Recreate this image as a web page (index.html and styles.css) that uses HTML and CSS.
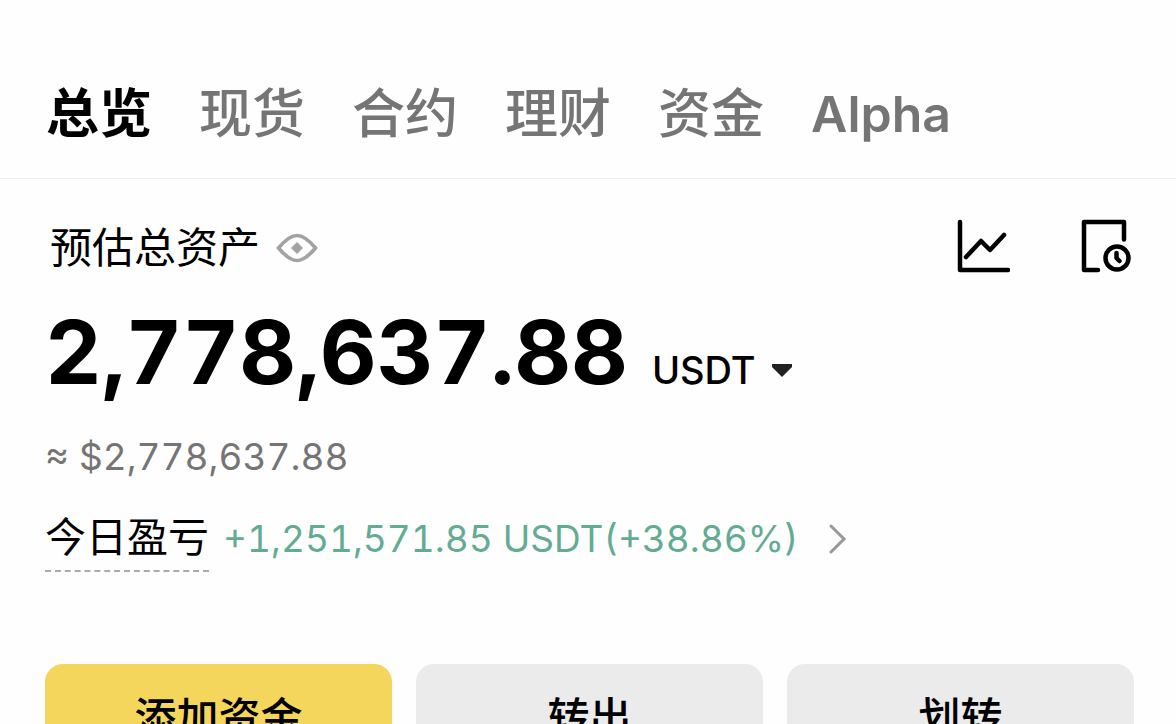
FILE: index.html
```html
<!DOCTYPE html>
<html lang="zh-CN">
<head>
  <meta charset="UTF-8">
  <meta name="viewport" content="width=device-width, initial-scale=1">
  <title>总览</title>
  <link rel="stylesheet" href="styles.css">
</head>
<body>
  <nav class="tabs">
    <a href="#" class="tab active">总览</a>
    <a href="#" class="tab">现货</a>
    <a href="#" class="tab">合约</a>
    <a href="#" class="tab">理财</a>
    <a href="#" class="tab">资金</a>
    <a href="#" class="tab">Alpha</a>
  </nav>

  <main class="overview">
    <div class="overview-head">
      <span class="label">预估总资产</span>
      <button class="icon-btn eye" aria-label="隐藏余额">
        <svg width="42" height="30" viewBox="0 0 42 30" fill="none">
          <path d="M2.500 15C10 6 15 2.500 21 2.500S32 6 39.500 15C32 24 27 27.500 21 27.500S10 24 2.500 15Z" stroke="#a3a3a3" stroke-width="3.600"/>
          <path d="M21 9l6 6-6 6-6-6z" fill="#a3a3a3"/>
        </svg>
      </button>
      <div class="tools">
        <button class="icon-btn" aria-label="走势">
          <svg width="54" height="54" viewBox="0 0 54 54" fill="none" stroke="#000" stroke-width="4.500" stroke-linecap="round" stroke-linejoin="round">
            <path d="M4 3v48h48"/>
            <path d="M10 38l15-16 9 9 14-15"/>
          </svg>
        </button>
        <button class="icon-btn" aria-label="历史记录">
          <svg width="54" height="54" viewBox="0 0 54 54" fill="none" stroke="#000" stroke-width="4.500" stroke-linecap="round" stroke-linejoin="round">
            <path d="M18 51H4V3h40v17.500"/>
            <circle cx="37" cy="39" r="11.500"/>
            <path d="M36.500 34v5l3 3"/>
          </svg>
        </button>
      </div>
    </div>

    <div class="balance">
      <span class="amount">2,778,637.88</span>
      <label class="currency">
        <select aria-label="币种">
          <option>USDT</option>
        </select>
        <svg width="20" height="15" viewBox="0 0 20 15"><path d="M0 1h20v3L10 14 0 4z" fill="#222"/></svg>
      </label>
    </div>

    <div class="fiat">≈ $2,778,637.88</div>

    <div class="pnl">
      <span class="pnl-label">今日盈亏</span>
      <a href="#" class="pnl-link">
        <span>+1,251,571.85 USDT(+38.86%)</span>
        <svg width="18" height="30" viewBox="0 0 18 30" fill="none"><path d="M2 2l13 13L2 28" stroke="#999" stroke-width="3" stroke-linecap="round"/></svg>
      </a>
    </div>

    <div class="actions">
      <button class="btn primary">添加资金</button>
      <button class="btn">转出</button>
      <button class="btn">划转</button>
    </div>
  </main>
</body>
</html>
```
FILE: styles.css
```css
:root {
  --text: #000;
  --muted: #757575;
  --green: #63ab93;
  --yellow: #f3d65b;
  --grey: #ebebeb;
}
* {
  box-sizing: border-box;
}
body {
  margin: 0;
  background: #fefefe;
  color: var(--text);
  font-family: Inter, "Noto Sans CJK SC", sans-serif;
  font-size: 37px;
  line-height: 48px;
  font-variant-numeric: tabular-nums;
}
a {
  color: inherit;
  text-decoration: none;
}
button,
select {
  padding: 0;
  border: none;
  background: none;
  color: inherit;
  font: inherit;
  cursor: pointer;
}
svg {
  display: block;
}
.tabs {
  display: flex;
  gap: 47px;
  padding: 80px 46px 30px;
  border-bottom: 1px solid #eee;
  font-size: 53px;
  line-height: 68px;
  font-weight: 500;
  white-space: nowrap;
}
.tab {
  color: var(--muted);
}
.tab:last-child {
  font-weight: 600;
  font-size: 50px;
}
.tab.active {
  color: var(--text);
  font-weight: 700;
}
.overview {
  padding: 35px 42px 48px 45px;
}
.overview-head {
  display: flex;
  align-items: center;
  padding-left: 5px;
}
.label {
  padding-top: 4px;
  font-size: 42px;
  line-height: 60px;
}
.eye {
  margin: 4px 0 0 16px;
}
.tools {
  display: flex;
  gap: 70px;
  margin-left: auto;
}
.balance {
  display: flex;
  align-items: baseline;
  gap: 24px;
  margin-top: 26px;
}
.amount {
  font-size: 88px;
  line-height: 96px;
  font-weight: 700;
}
.currency {
  display: flex;
  align-items: center;
  gap: 16px;
  font-size: 38px;
  font-weight: 500;
}
.currency select {
  appearance: none;
}
.fiat {
  margin-top: 33px;
  color: var(--muted);
}
.pnl {
  display: flex;
  align-items: flex-start;
  gap: 14px;
  margin-top: 32px;
}
.pnl-label {
  padding-bottom: 9px;
  border-bottom: 2px dashed #aaa;
  font-size: 41px;
}
.pnl-link {
  display: flex;
  align-items: center;
  gap: 30px;
  margin-top: 2px;
  color: var(--green);
}
.actions {
  display: grid;
  grid-template-columns: repeat(3, 1fr);
  gap: 24px;
  margin-top: 92px;
}
.btn {
  height: 108px;
  border-radius: 18px;
  background: var(--grey);
  font-size: 42px;
  font-weight: 500;
}
.primary {
  background: var(--yellow);
}
```
